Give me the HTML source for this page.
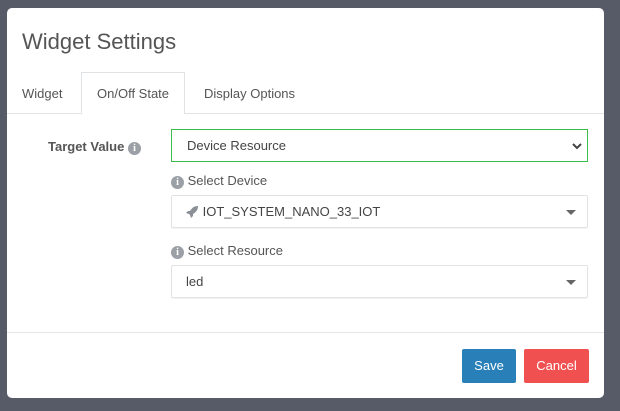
<!DOCTYPE html>
<html><head><style>
*{box-sizing:border-box;margin:0;padding:0}
body{width:620px;height:411px;background:#575b68;font-family:"Liberation Sans",sans-serif;position:relative;overflow:hidden;color:#444}
.m{position:absolute;left:7px;top:8px;width:597px;height:390px;background:#fff;border-radius:5px}
.t{position:absolute;left:15px;top:21px;font-size:22px;color:#555}
.tabs{position:absolute;left:0;top:105px;width:597px;border-top:1px solid #dfe3e6}
.tab{position:absolute;top:78px;font-size:13px;color:#555}
.act{position:absolute;left:74px;top:64px;width:104px;height:42px;border:1px solid #dfe3e6;border-bottom:none;background:#fff}
.lbl{position:absolute;font-size:13px;color:#555}
.b{font-weight:bold}
.i{display:inline-block;width:13px;height:13px;border-radius:50%;background:#9aa0a6;color:#fff;font-size:10px;font-weight:bold;text-align:center;line-height:13px;vertical-align:0px;font-family:"Liberation Serif",serif}
.sel{position:absolute;left:164px;width:417px;height:33px;border:1px solid #dfe3e6;border-radius:2px;font-size:13px;color:#444;padding-left:31px;line-height:31px;box-shadow:0 1px 1px rgba(0,0,0,0.05)}
.car{position:absolute;right:11px;top:14px;border-left:5px solid transparent;border-right:5px solid transparent;border-top:5px solid #666}
.ft{position:absolute;left:0;top:324px;width:597px;border-top:1px solid #e3e6e8}
.btn{position:absolute;top:341px;height:34px;color:#fff;font-size:13px;text-align:center;line-height:34px;border-radius:2px}
.g{position:absolute;left:164px;top:121px;width:417px;height:33px;background:#fff;box-shadow:inset 0 0 0 1px #3dbb4d;font-size:13px;color:#444;padding-left:16px;line-height:33px}
</style></head><body>
<div class="m">
<div class="t">Widget Settings</div>
<div class="tabs"></div>
<div class="act"></div>
<div class="tab" style="left:15px">Widget</div>
<div class="tab" style="left:90px">On/Off State</div>
<div class="tab" style="left:197px">Display Options</div>
<div class="lbl b" style="left:41px;top:131px">Target Value <span class="i">i</span></div>
<div class="g">Device Resource
<svg style="position:absolute;right:6px;top:13px" width="10" height="8" viewBox="0 0 10 8"><path d="M1 2l4 4 4-4" stroke="#444" stroke-width="2" fill="none"/></svg></div>
<div class="lbl" style="left:164px;top:165px"><span class="i">i</span> Select Device</div>
<div class="sel" style="top:187px;padding-left:14px"><svg width="13" height="13" viewBox="0 0 13 13" style="vertical-align:-2px"><path d="M12 1C8 1 6 3 4 6L2 6 0 8 3 9 4 10 5 13 7 11 7 9C10 7 12 5 12 1Z" fill="#8a9096"/></svg> IOT_SYSTEM_NANO_33_IOT<div class="car"></div></div>
<div class="lbl" style="left:164px;top:235px"><span class="i">i</span> Select Resource</div>
<div class="sel" style="top:257px;padding-left:14px">led<div class="car"></div></div>
<div class="ft"></div>
<div class="btn" style="left:455px;width:54px;background:#2980b9">Save</div>
<div class="btn" style="left:517px;width:65px;background:#f05050">Cancel</div>
</div>
</body></html>
